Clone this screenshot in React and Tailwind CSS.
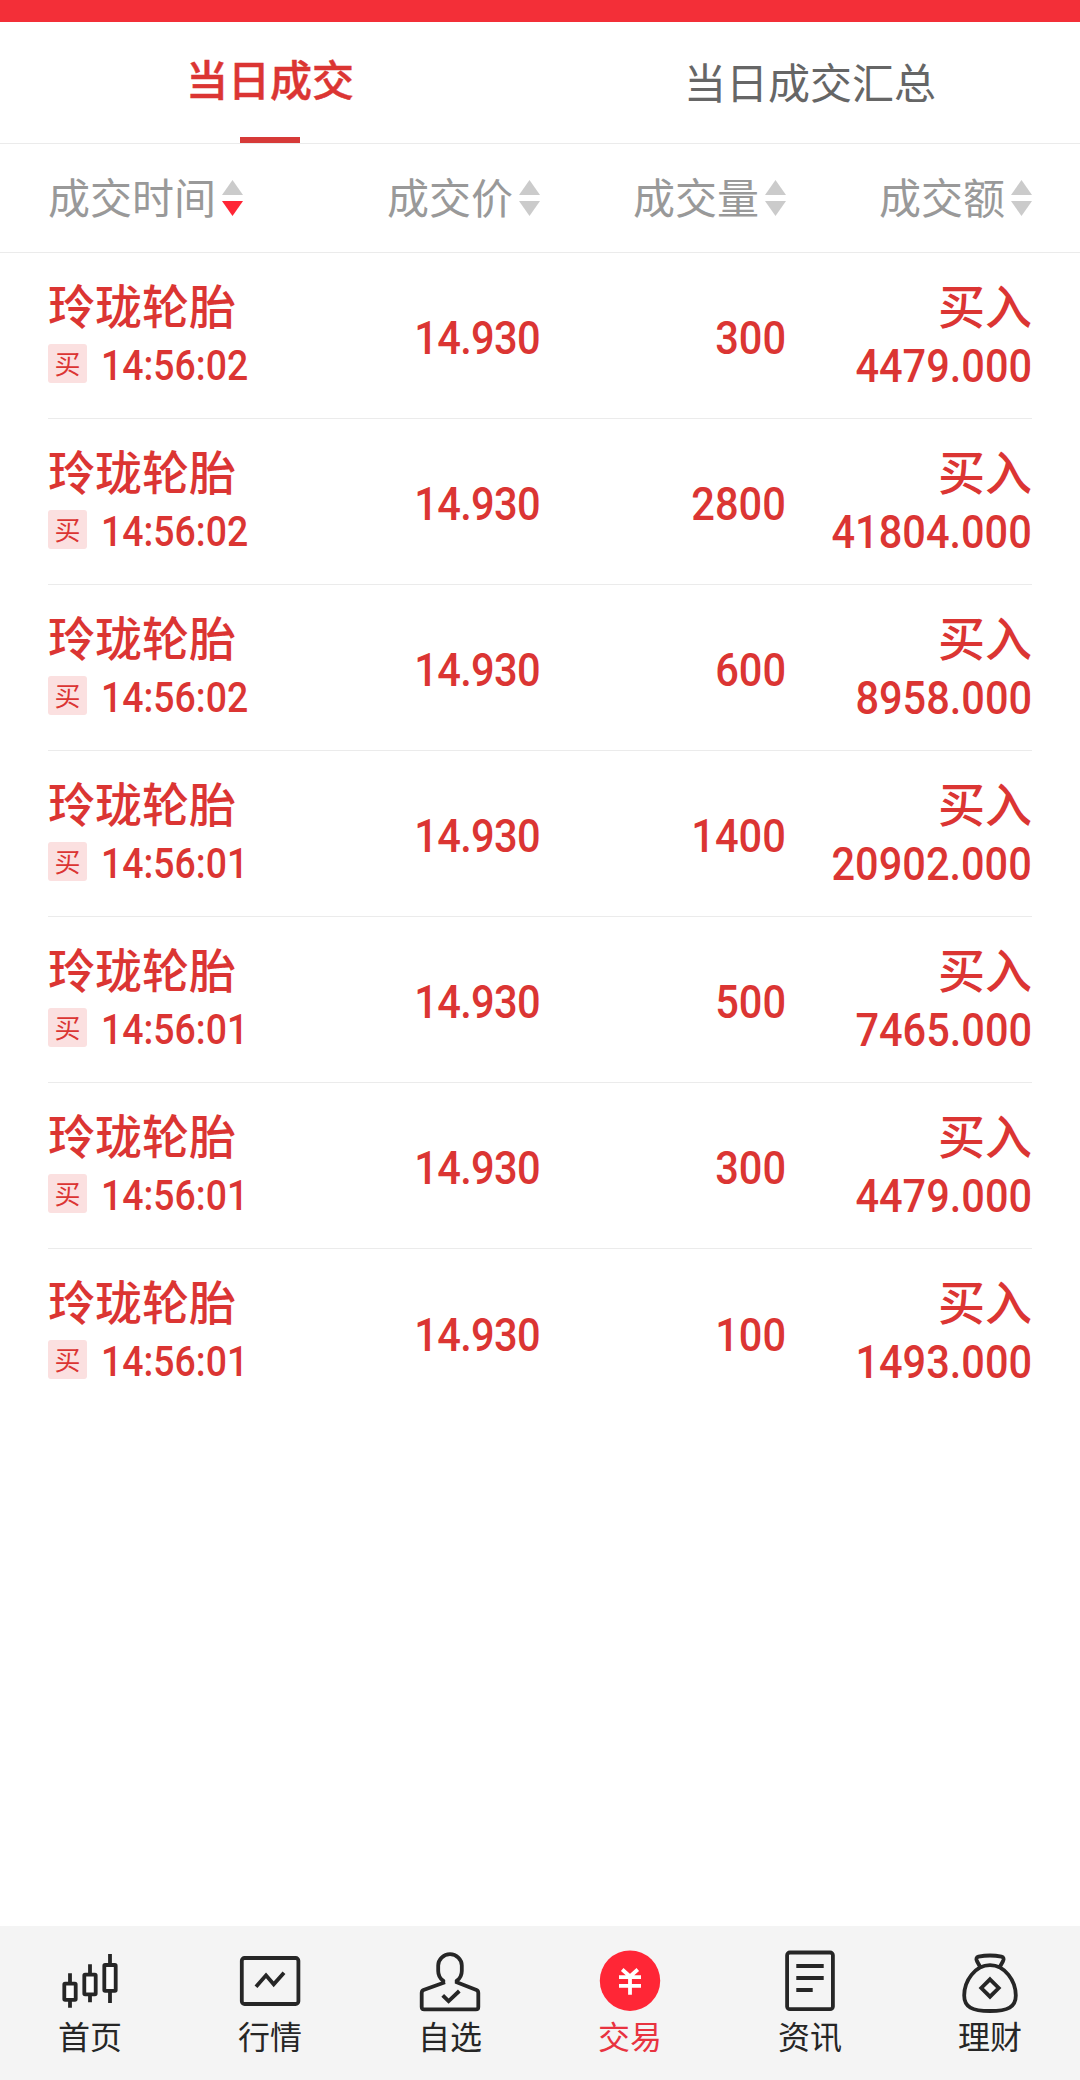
import React, { useState } from 'react';

const TRADES = [
    { name: '玲珑轮胎', time: '14:56:02', price: '14.930', volume: '300', amount: '4479.000' },
    { name: '玲珑轮胎', time: '14:56:02', price: '14.930', volume: '2800', amount: '41804.000' },
    { name: '玲珑轮胎', time: '14:56:02', price: '14.930', volume: '600', amount: '8958.000' },
    { name: '玲珑轮胎', time: '14:56:01', price: '14.930', volume: '1400', amount: '20902.000' },
    { name: '玲珑轮胎', time: '14:56:01', price: '14.930', volume: '500', amount: '7465.000' },
    { name: '玲珑轮胎', time: '14:56:01', price: '14.930', volume: '300', amount: '4479.000' },
    { name: '玲珑轮胎', time: '14:56:01', price: '14.930', volume: '100', amount: '1493.000' },
];

const COLUMNS = ['成交时间', '成交价', '成交量', '成交额'];

const NAV_ITEMS = [
    {
        label: '首页',
        icon: (
            <g>
                <path d="M10 23.3v9M10 50.5v7.2M30 14.3v9M30 45v7.3M50 4v10M50 41.5v11.5" />
                <rect x="4.3" y="33.6" width="11.4" height="16.2" rx="0.8" fill="#fcfcfc" />
                <rect x="24.3" y="24.6" width="11.4" height="19.8" rx="0.8" fill="#fcfcfc" />
                <rect x="44.3" y="15" width="11.4" height="25.8" rx="0.8" fill="#fcfcfc" />
            </g>
        ),
    },
    {
        label: '行情',
        icon: (
            <g>
                <rect x="1.8" y="8" width="56.6" height="46" rx="2.8" />
                <path d="M16 36.7 26 25.3l7.7 9L44 22.7" />
            </g>
        ),
    },
    {
        label: '自选',
        icon: (
            <g>
                <path d="M23.3 34.3v-3.4C20 28.5 18.2 25 18.2 21v-5.5a11.8 11.3 0 0 1 23.6 0V21c0 4-1.8 7.5-5.1 9.9v1.4L56.5 40Q58.3 40.8 58.3 43v14q0 2.4-2.4 2.4H4.1q-2.4 0-2.4-2.4V43q0-2.2 1.8-3L25 32.3" />
                <path d="m22.7 45.3 5.9 5.9L39.3 41" />
            </g>
        ),
    },
    {
        label: '交易',
        active: true,
        icon: (
            <g>
                <circle cx="30" cy="30.7" r="30.2" fill="#ff2636" stroke="none" />
                <path stroke="#fff" d="m22.2 19.5 7.8 7 7.8-7M30 27v17.7M19 27.2h22M19 35.8h22" />
            </g>
        ),
    },
    {
        label: '资讯',
        icon: (
            <g>
                <rect x="7.1" y="2.5" width="45.8" height="56.7" rx="2.8" />
                <path d="M16.3 16h27.4M16.3 28h27.4M16.3 40h16.4" />
            </g>
        ),
    },
    {
        label: '理财',
        icon: (
            <g>
                <path d="M30 15.2C15 15.2 4.2 31 4.2 45.5 4.2 57 12 61 30 61s25.800-4 25.800-15.500C55.800 31 45 15.2 30 15.2Z" />
                <path d="m20.5 17.500-3.600-6.500c-1-2-.6-3.700 1.600-4.300Q30 4.300 41.500 6.700c2.200.6 2.600 2.300 1.600 4.300l-3.600 6.500" />
                <path d="m30 29.3 8.7 8.7-8.7 8.7-8.7-8.7z" />
            </g>
        ),
    },
];

const SortArrows = ({ desc }) => (
    <svg className="h-9 w-[21px] shrink-0" viewBox="0 0 21 36">
        <path d="M10.5 0 21 15H0z" fill="#cbcbcb" />
        <path d="M0 21h21L10.5 36z" fill={desc ? '#ff2636' : '#cbcbcb'} />
    </svg>
);

const TradeRow = ({ trade }) => (
    <div className="mx-12 grid h-[166px] grid-cols-4 border-b border-[#ebebeb] text-[#db3533] last:border-b-0">
        <div className="flex flex-col pt-6 whitespace-nowrap">
            <div className="text-[47px] leading-[54px] font-medium">{trade.name}</div>
            <div className="mt-3 flex h-10 items-center">
                <span className="flex size-[39px] items-center justify-center rounded-[3px] bg-[#fbe0e0] pb-px text-[26px] leading-none">买</span>
                <span className="mt-[5px] ml-[14px] origin-left scale-x-[.89] font-[Roboto] text-[42px] leading-10 font-medium">{trade.time}</span>
            </div>
        </div>
        <div className="flex items-center justify-end pt-1">
            <span className="origin-right scale-x-[.885] font-[Roboto] text-[47px] leading-none font-medium tracking-[-0.8px]">{trade.price}</span>
        </div>
        <div className="flex items-center justify-end pt-1">
            <span className="origin-right scale-x-[.885] font-[Roboto] text-[47px] leading-none font-medium">{trade.volume}</span>
        </div>
        <div className="flex flex-col items-end pt-6">
            <span className="text-[47px] leading-[54px] font-medium">买入</span>
            <span className="mt-3 origin-right scale-x-[.883] font-[Roboto] text-[47px] leading-[46px] font-medium">{trade.amount}</span>
        </div>
    </div>
);

const App = () => {
    const [tab, setTab] = useState('today');

    return (
        <div className="flex h-[2080px] w-[1080px] flex-col bg-white font-['Noto_Sans_CJK_SC',sans-serif]">
            <div className="h-[22px] bg-[#f32f38]"></div>

            <div className="flex h-[122px] border-b border-[#ebebeb]">
                <button onClick={() => setTab('today')} className="flex flex-1 flex-col items-center justify-between pt-[26px]">
                    <span className="text-[42px] leading-[60px] font-medium text-[#db3533] [-webkit-text-stroke:0.5px]">当日成交</span>
                    {tab === 'today' && <span className="h-1.5 w-15 bg-[#d63a38]"></span>}
                </button>
                <button onClick={() => setTab('summary')} className="flex flex-1 flex-col items-center justify-between pt-[29px]">
                    <span className="text-[42px] leading-[60px] text-[#666]">当日成交汇总</span>
                    {tab === 'summary' && <span className="h-1.5 w-15 bg-[#d63a38]"></span>}
                </button>
            </div>

            <div className="grid h-[109px] grid-cols-4 border-b border-[#ebebeb] px-12">
                {COLUMNS.map((col, i) => (
                    <div key={col} className={`flex items-center gap-1.5 text-[42px] leading-none text-[#999] ${i === 0 ? 'justify-start' : 'justify-end'}`}>
                        <span className="pb-1">{col}</span>
                        <SortArrows desc={i === 0} />
                    </div>
                ))}
            </div>

            <div className="flex-1">
                {TRADES.map((trade, i) => (
                    <TradeRow key={i} trade={trade} />
                ))}
            </div>

            <nav className="grid h-[154px] grid-cols-6 bg-[#f4f4f4]">
                {NAV_ITEMS.map((item) => (
                    <div key={item.label} className="flex flex-col items-center pt-6">
                        <svg className="h-16 w-[62px]" viewBox="-1 0 62 64" fill="none" stroke="#262626" strokeWidth="3.8">
                            {item.icon}
                        </svg>
                        <span className={`mt-px text-[32px] leading-10 ${item.active ? 'text-[#e8333f]' : 'text-[#262626]'}`}>{item.label}</span>
                    </div>
                ))}
            </nav>
        </div>
    );
};

export default App;
